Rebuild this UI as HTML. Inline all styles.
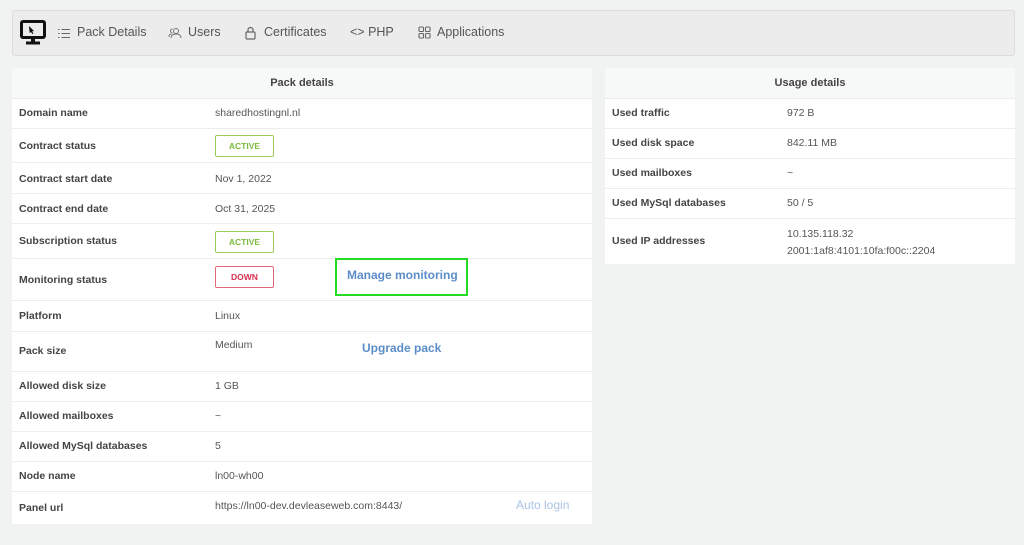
<!DOCTYPE html>
<html><head><meta charset="utf-8"><style>
*{box-sizing:border-box;margin:0;padding:0}
body{width:1024px;height:545px;background:#f1f2f2;font-family:"Liberation Sans",sans-serif;position:relative;overflow:hidden;color:#555}
.nav{position:absolute;left:12px;top:10px;width:1003px;height:46px;background:#ececec;border:1px solid #dcdcdc;border-radius:3px}
.nav span{position:absolute;top:14px;font-size:12.5px;color:#555}
.tbl{position:absolute;background:#fff}
.hd{position:absolute;left:0;right:0;top:0;height:30px;background:#f7f8f8;text-align:center;font-weight:bold;font-size:11px;line-height:30px;color:#444}
.row{position:absolute;left:0;right:0;border-top:1px solid #eceeee}
.l{position:absolute;left:7px;font-weight:bold;font-size:10.5px;color:#444}
.v{position:absolute;font-size:10.5px;color:#555}
.badge{position:absolute;width:59px;height:22px;border:1px solid #9bcc5a;border-radius:2px;color:#7cba3a;font-size:8.5px;font-weight:bold;text-align:center;line-height:20px}
.down{border-color:#e0667a;color:#d6334e}
.lnk{position:absolute;color:#5b8ec9;font-weight:bold;font-size:12px}
</style></head><body>
<div class="nav">
<svg style="position:absolute;left:7px;top:9px" width="26" height="26" viewBox="0 0 26 26"><rect x="1.5" y="1.5" width="23" height="16" rx="1.5" fill="none" stroke="#111" stroke-width="3"/><path d="M9 6l5 5-2 .5 1.5 2-1 .6-1.4-2L9.7 13z" fill="#111"/><rect x="11" y="18" width="4" height="4" fill="#111"/><rect x="6" y="21.5" width="14" height="3" fill="#111"/></svg>
<svg style="position:absolute;left:45px;top:17px" width="12" height="11" viewBox="0 0 12 11" stroke="#666" stroke-width="1"><path d="M0 1.5h1.5M0 5.5h1.5M0 9.5h1.5M3.5 1.5H12M3.5 5.5H12M3.5 9.5H12"/></svg>
<span style="left:64px">Pack Details</span>
<svg style="position:absolute;left:155px;top:16px" width="14" height="12" viewBox="0 0 14 12" fill="none" stroke="#777" stroke-width="1"><circle cx="8" cy="4" r="2.5"/><path d="M3 11c0-3 2.5-4 5-4s5 1 5 4M4.5 6a2 2 0 010-4M1 10c0-2 1-3 2.5-3"/></svg>
<span style="left:175px">Users</span>
<svg style="position:absolute;left:232px;top:15px" width="11" height="14" viewBox="0 0 11 14" fill="none" stroke="#666" stroke-width="1.2"><path d="M3 6V4a2.5 2.5 0 015 0v2"/><rect x="1" y="6" width="9" height="7" rx="1"/></svg>
<span style="left:251px">Certificates</span>
<span style="left:337px">&lt;&gt; PHP</span>
<svg style="position:absolute;left:405px;top:15px" width="13" height="13" viewBox="0 0 13 13" fill="none" stroke="#666" stroke-width="1.1"><rect x="1" y="1" width="4.5" height="4.5" rx="1"/><rect x="7.5" y="1" width="4.5" height="4.5" rx="1"/><rect x="1" y="7.5" width="4.5" height="4.5" rx="1"/><rect x="7.5" y="7.5" width="4.5" height="4.5" rx="1"/></svg>
<span style="left:424px">Applications</span>
</div>

<div class="tbl" style="left:12px;top:68px;width:580px;height:456px">
<div class="hd">Pack details</div>
<div class="row" style="top:30px;height:30px"><div class="l" style="top:8px">Domain name</div><div class="v" style="left:203px;top:8px">sharedhostingnl.nl</div></div>
<div class="row" style="top:60px;height:34px"><div class="l" style="top:11px">Contract status</div><div class="badge" style="left:203px;top:6px">ACTIVE</div></div>
<div class="row" style="top:94px;height:31px"><div class="l" style="top:10px">Contract start date</div><div class="v" style="left:203px;top:10px">Nov 1, 2022</div></div>
<div class="row" style="top:125px;height:30px"><div class="l" style="top:9px">Contract end date</div><div class="v" style="left:203px;top:9px">Oct 31, 2025</div></div>
<div class="row" style="top:155px;height:35px"><div class="l" style="top:11px">Subscription status</div><div class="badge" style="left:203px;top:7px">ACTIVE</div></div>
<div class="row" style="top:190px;height:42px"><div class="l" style="top:15px">Monitoring status</div><div class="badge down" style="left:203px;top:7px">DOWN</div>
<div style="position:absolute;left:323px;top:-1px;width:133px;height:38px;border:2px solid #22dd22"></div><div class="lnk" style="left:335px;top:9px">Manage monitoring</div></div>
<div class="row" style="top:232px;height:31px"><div class="l" style="top:9px">Platform</div><div class="v" style="left:203px;top:9px">Linux</div></div>
<div class="row" style="top:263px;height:40px"><div class="l" style="top:13px">Pack size</div><div class="v" style="left:203px;top:7px">Medium</div><div class="lnk" style="left:350px;top:9px">Upgrade pack</div></div>
<div class="row" style="top:303px;height:30px"><div class="l" style="top:8px">Allowed disk size</div><div class="v" style="left:203px;top:8px">1 GB</div></div>
<div class="row" style="top:333px;height:30px"><div class="l" style="top:8px">Allowed mailboxes</div><div class="v" style="left:203px;top:8px">~</div></div>
<div class="row" style="top:363px;height:30px"><div class="l" style="top:8px">Allowed MySql databases</div><div class="v" style="left:203px;top:8px">5</div></div>
<div class="row" style="top:393px;height:30px"><div class="l" style="top:8px">Node name</div><div class="v" style="left:203px;top:8px">ln00-wh00</div></div>
<div class="row" style="top:423px;height:33px"><div class="l" style="top:10px">Panel url</div><div class="v" style="left:203px;top:8px">https://ln00-dev.devleaseweb.com:8443/</div><div class="lnk" style="left:504px;top:6px;color:#a9c3e2;font-weight:normal">Auto login</div></div>
</div>

<div class="tbl" style="left:605px;top:68px;width:410px;height:196px">
<div class="hd">Usage details</div>
<div class="row" style="top:30px;height:30px"><div class="l" style="top:8px">Used traffic</div><div class="v" style="left:182px;top:8px">972 B</div></div>
<div class="row" style="top:60px;height:30px"><div class="l" style="top:8px">Used disk space</div><div class="v" style="left:182px;top:8px">842.11 MB</div></div>
<div class="row" style="top:90px;height:30px"><div class="l" style="top:8px">Used mailboxes</div><div class="v" style="left:182px;top:8px">~</div></div>
<div class="row" style="top:120px;height:30px"><div class="l" style="top:8px">Used MySql databases</div><div class="v" style="left:182px;top:8px">50 / 5</div></div>
<div class="row" style="top:150px;height:46px"><div class="l" style="top:16px">Used IP addresses</div><div class="v" style="left:182px;top:7px;line-height:17px">10.135.118.32<br>2001:1af8:4101:10fa:f00c::2204</div></div>
</div>
</body></html>
